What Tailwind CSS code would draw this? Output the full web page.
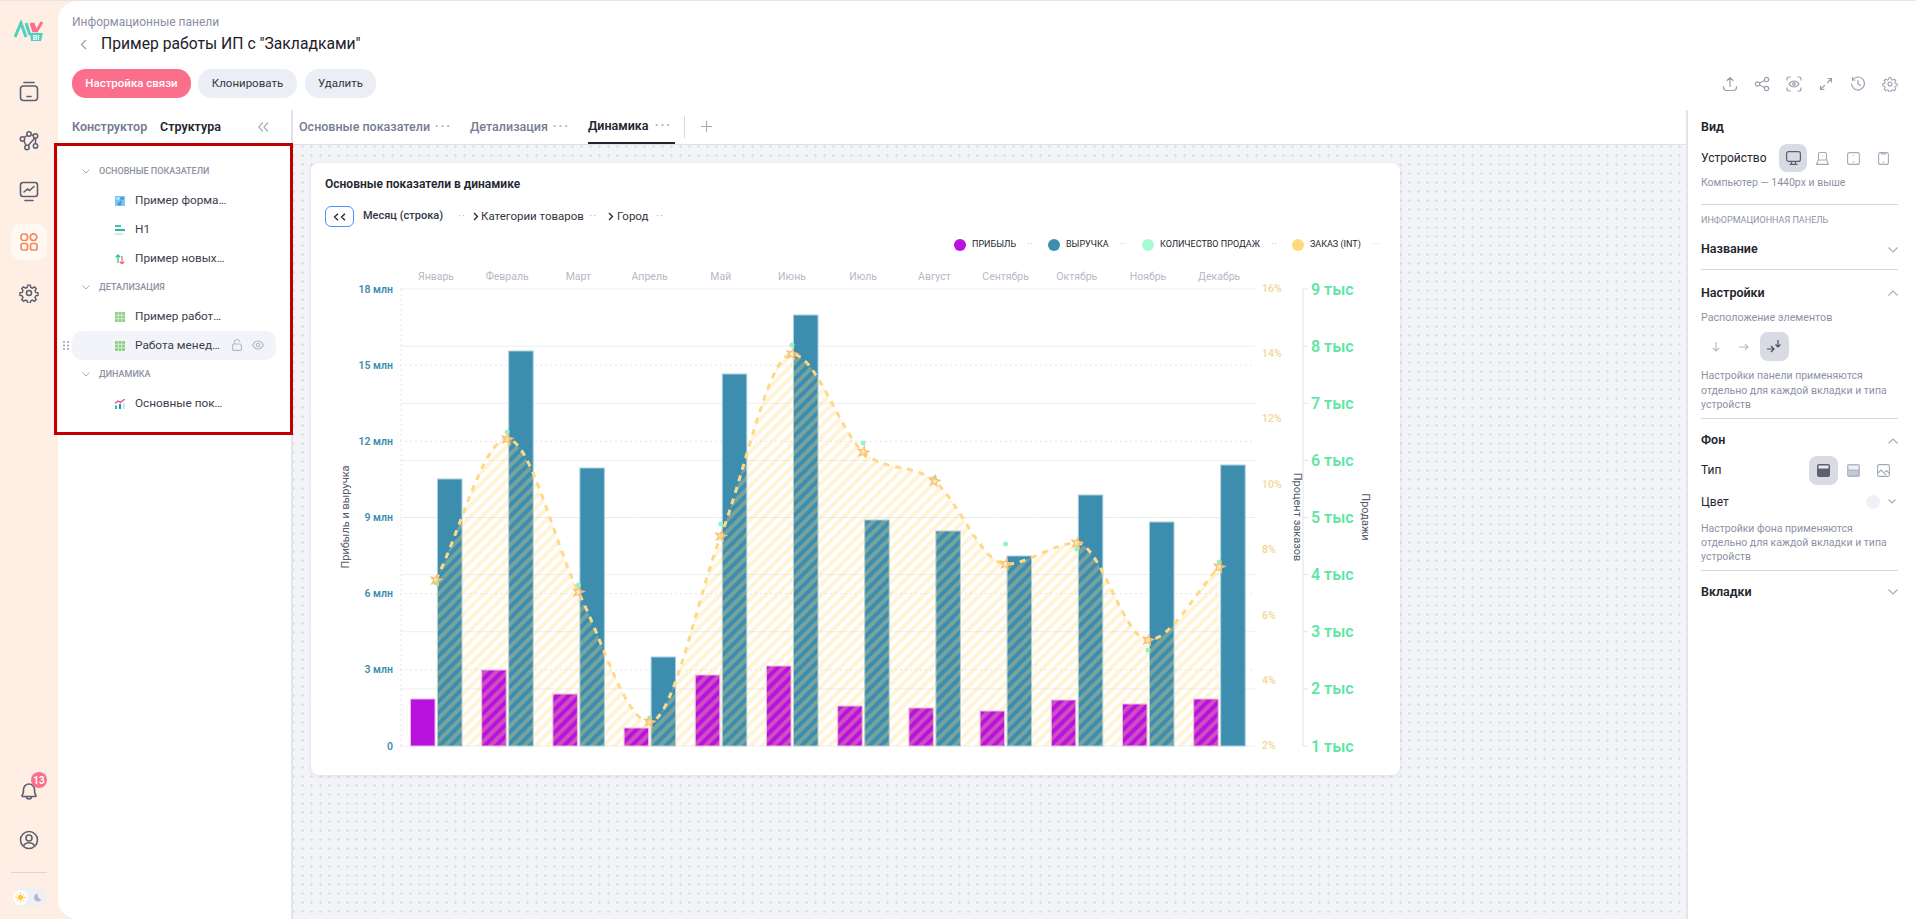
<!DOCTYPE html>
<html lang="ru">
<head>
<meta charset="UTF-8">
<title>Пример работы ИП с "Закладками"</title>
<script src="https://cdn.jsdelivr.net/npm/@tailwindcss/browser@4"></script>
</head>
<body class="[font-family:Roboto,sans-serif] bg-[#ffeee4] text-[#23252e] overflow-hidden">
<div class="flex h-[919px] w-[1916px] border-t border-[#e6e6e6] relative">

  <!-- Sidebar -->
  <aside class="w-[58px] shrink-0 flex flex-col items-center">
    <div class="h-[58px] flex items-center justify-center pt-[2px]">
      <svg width="30" height="22" viewBox="0 0 30 22" fill="none" stroke-width="3">
        <path d="M1 17 L7 3 L12 17" stroke="#4fd1c0"/>
        <path d="M12 3 L16 15" stroke="#4fd1c0"/>
        <path d="M17 3 L20 12 M22 12 L28 2" stroke="#fb6f8c"/>
        <path d="M19 3 L22 12" stroke="#fb6f8c"/>
        <path d="M16 13 h13 l-2 8 h-10z" fill="#4fd1c0" stroke="none"/>
        <text x="22" y="19.5" text-anchor="middle" font-size="7" font-weight="700" fill="#fff" stroke="none">BI</text>
      </svg>
    </div>
    <div class="mt-[20px] h-[24px] flex items-center justify-center">
      <svg width="20" height="21" viewBox="0 0 20 21" fill="none" stroke="#5b6070" stroke-width="1.6" stroke-linecap="round"><path d="M5 1.5h10"/><rect x="1.5" y="5" width="17" height="14.5" rx="3"/><path d="M8 15.5h4"/></svg>
    </div>
    <div class="mt-[26px] h-[24px] flex items-center justify-center">
      <svg width="20" height="20" viewBox="0 0 20 20" fill="none" stroke="#5b6070" stroke-width="1.5"><circle cx="3.5" cy="8" r="2.2"/><circle cx="10" cy="3" r="2.2"/><circle cx="16.5" cy="5" r="2.2"/><circle cx="8" cy="16.5" r="2.2"/><circle cx="16.5" cy="15" r="2.2"/><path d="M5.2 6.5 8.2 4.4M12 3.4l2.4.8M15.8 7 9.2 14.6M5 10l2 4.5M16.5 7.2v5.6"/></svg>
    </div>
    <div class="mt-[26px] h-[24px] flex items-center justify-center">
      <svg width="20" height="21" viewBox="0 0 20 21" fill="none" stroke="#5b6070" stroke-width="1.6" stroke-linecap="round"><rect x="1.5" y="1.5" width="17" height="14" rx="2.5"/><path d="M5 11l3.500-3 2 1.500L15 5.500"/><path d="M6 19.500h8"/></svg>
    </div>
    <div class="mt-[21px] w-[36px] h-[36px] rounded-[10px] bg-[#fff8f3] flex items-center justify-center">
      <svg width="18" height="18" viewBox="0 0 18 18" fill="none" stroke="#f08a5d" stroke-width="1.7"><rect x="1" y="1" width="6.500" height="6.500" rx="2.500"/><circle cx="13.500" cy="4.200" r="3.300"/><rect x="1" y="10.500" width="6.500" height="6.500" rx="1.800"/><rect x="10.500" y="10.500" width="6.500" height="6.500" rx="1.800"/></svg>
    </div>
    <div class="mt-[21px] h-[24px] flex items-center justify-center">
      <svg width="20" height="20" viewBox="0 0 24 24" fill="none" stroke="#5b6070" stroke-width="1.900"><circle cx="12" cy="12" r="3"/><path d="M10.300 1.500h3.400l.6 3 2.400 1 2.600-1.700 2.400 2.400-1.700 2.600 1 2.400 3 .6v3.400l-3 .6-1 2.400 1.700 2.600-2.400 2.400-2.600-1.700-2.400 1-.6 3h-3.400l-.6-3-2.400-1-2.600 1.700-2.400-2.400 1.700-2.600-1-2.400-3-.6v-3.400l3-.6 1-2.400L2.300 6.200l2.400-2.400 2.600 1.700 2.400-1z" transform="translate(1.200 1.200) scale(.9)"/></svg>
    </div>
    <div class="mt-auto relative h-[24px] w-[24px] flex items-center justify-center mb-[27px]">
      <svg width="18" height="20" viewBox="0 0 18 20" fill="none" stroke="#5b6070" stroke-width="1.600" stroke-linejoin="round"><path d="M2 14.500c1.500-1.500 1.500-3 1.500-6a5.500 5.500 0 0 1 11 0c0 3 0 4.500 1.500 6 .4.500 0 1-.5 1h-13c-.5 0-.9-.5-.5-1z"/><path d="M6.500 15.500a2.500 2.500 0 0 0 5 0"/></svg>
      <span class="absolute -top-[7px] left-[14px] w-[16px] h-[16px] rounded-full bg-[#fb6f8c] text-white text-[10px] font-semibold flex items-center justify-center">13</span>
    </div>
    <div class="h-[20px] flex items-center justify-center mb-[22px]">
      <svg width="20" height="20" viewBox="0 0 20 20" fill="none" stroke="#5b6070" stroke-width="1.600"><circle cx="10" cy="10" r="8.500"/><circle cx="10" cy="8" r="3"/><path d="M4.500 15.500c1.500-2 3.500-2.800 5.500-2.800s4 .8 5.500 2.800"/></svg>
    </div>
    <div class="w-[36px] border-t border-[#d5d8e0] mb-[15px]"></div>
    <div class="w-[35px] h-[18px] rounded-full bg-[#eef0f6] flex items-center justify-between px-[1px] mb-[13px]">
      <span class="w-[15px] h-[15px] rounded-full bg-white flex items-center justify-center">
        <svg width="11" height="11" viewBox="0 0 11 11" stroke="#ffc93c" stroke-width="1" stroke-linecap="round"><circle cx="5.500" cy="5.500" r="2.400" fill="#ffc93c"/><path d="M5.500.5v1M5.500 9.500v1M.5 5.500h1M9.500 5.500h1M2 2l.7.7M8.300 8.300l.7.7M2 9l.7-.7M8.300 2.700 9 2"/></svg>
      </span>
      <svg class="mr-[4px]" width="9" height="9" viewBox="0 0 9 9"><path d="M5 .5A4 4 0 1 0 8.500 6.500 4.500 4.500 0 0 1 5 .5z" fill="#b3b8cb"/></svg>
    </div>
  </aside>

  <!-- Main -->
  <main class="flex-1 min-w-0 flex flex-col bg-white rounded-l-[20px]">
    <header class="h-[109px] shrink-0 pt-[14px] pl-[14px] pr-[18px]">
      <div class="text-[12px] leading-[14px] text-[#8a8fa3]">Информационные панели</div>
      <div class="mt-[4px] h-[22px] flex items-center">
        <svg class="ml-[8px]" width="7" height="11" viewBox="0 0 7 11" fill="none" stroke="#9a9fb0" stroke-width="1.300"><path d="M6 1 1.500 5.500 6 10"/></svg>
        <h1 class="ml-[14px] text-[15.700px] leading-[22px] font-normal text-[#1e2029]">Пример работы ИП с "Закладками"</h1>
      </div>
      <div class="mt-[14px] flex items-center">
        <button class="h-[29px] w-[119px] rounded-[14px] bg-[#fb6f8c] text-white text-[11.500px] font-medium">Настройка связи</button>
        <button class="ml-[7px] h-[29px] w-[99px] rounded-[14px] bg-[#eceef5] text-[#33363f] text-[11.500px]">Клонировать</button>
        <button class="ml-[8px] h-[29px] w-[71px] rounded-[14px] bg-[#eceef5] text-[#33363f] text-[11.500px]">Удалить</button>
        <div class="ml-auto flex items-center gap-[16px] text-[#9ba0b0]">
          <svg width="16" height="16" viewBox="0 0 16 16" fill="none" stroke="currentColor" stroke-width="1.200" stroke-linecap="round"><path d="M8 10.500V2M5 4.500 8 1.500l3 3M1.500 10.500c0 2.500 1 4 3 4h7c2 0 3-1.500 3-4"/></svg>
          <svg width="16" height="16" viewBox="0 0 16 16" fill="none" stroke="currentColor" stroke-width="1.200"><circle cx="3.500" cy="8" r="2.200"/><circle cx="12.500" cy="3.500" r="2.200"/><circle cx="12.500" cy="12.500" r="2.200"/><path d="M5.500 7l5-2.500M5.500 9l5 2.500"/></svg>
          <svg width="16" height="16" viewBox="0 0 16 16" fill="none" stroke="currentColor" stroke-width="1.200"><path d="M1 4.500V3a2 2 0 0 1 2-2h1.500M11.500 1H13a2 2 0 0 1 2 2v1.500M15 11.500V13a2 2 0 0 1-2 2h-1.500M4.500 15H3a2 2 0 0 1-2-2v-1.500"/><path d="M3 8c1.300-2 3-3 5-3s3.700 1 5 3c-1.300 2-3 3-5 3s-3.700-1-5-3z"/><circle cx="8" cy="8" r="1.300"/></svg>
          <svg width="16" height="16" viewBox="0 0 16 16" fill="none" stroke="currentColor" stroke-width="1.200" stroke-linecap="round"><path d="M9.500 6.500 13.500 2.500M10 2.500h3.500V6M6.500 9.500l-4 4M6 13.500H2.500V10"/></svg>
          <svg width="16" height="16" viewBox="0 0 16 16" fill="none" stroke="currentColor" stroke-width="1.200" stroke-linecap="round"><path d="M2.500 4A6.500 6.500 0 1 1 1.500 8"/><path d="M2.500 1.500V4H5M8 4.500V8l2.500 1.500"/></svg>
          <svg width="16" height="16" viewBox="0 0 24 24" fill="none" stroke="currentColor" stroke-width="1.700"><circle cx="12" cy="12" r="3"/><path d="M10.300 1.500h3.400l.6 3 2.400 1 2.600-1.700 2.400 2.400-1.700 2.600 1 2.400 3 .6v3.400l-3 .6-1 2.400 1.700 2.600-2.400 2.400-2.600-1.700-2.400 1-.6 3h-3.400l-.6-3-2.400-1-2.600 1.700-2.400-2.400 1.700-2.600-1-2.400-3-.6v-3.400l3-.6 1-2.400L2.300 6.200l2.400-2.400 2.600 1.700 2.400-1z" transform="translate(1.200 1.200) scale(.9)"/></svg>
        </div>
      </div>
    </header>

    <div class="flex flex-1 min-h-0">
      <!-- Left panel -->
      <section class="w-[235px] shrink-0 border-r-2 border-[#e1e4ed]">
        <div class="h-[34px] pl-[14px] pr-[22px] flex items-center text-[12.500px] font-semibold">
          <span class="w-[88px] text-[#767c92]">Конструктор</span>
          <span class="text-[#23252e]">Структура</span>
          <svg class="ml-auto" width="11" height="10" viewBox="0 0 11 10" fill="none" stroke="#a5aabb" stroke-width="1.100"><path d="M5 .5.800 5 5 9.500M10 .5 5.800 5 10 9.500"/></svg>
        </div>
        <ul class="ml-[14px] w-[204px] pt-[13px] text-[11.800px] text-[#3b3e4a]">
          <li class="h-[29px] pl-[10px] flex items-center text-[9px] font-medium text-[#8d92a5]">
            <svg class="mr-[9px]" width="8" height="5" viewBox="0 0 8 5" fill="none" stroke="#a5aabb" stroke-width="1"><path d="M.5.500 4 4 7.500.500"/></svg>ОСНОВНЫЕ ПОКАЗАТЕЛИ
          </li>
          <li class="h-[29px] pl-[43px] flex items-center gap-[10px]">
            <svg width="10" height="10" viewBox="0 0 10 10"><rect width="10" height="10" rx="1" fill="#7cc4f0"/><rect x="1.500" y="1.500" width="3" height="2" fill="#d6ecfa"/><rect x="5.500" y="1.500" width="3" height="2" fill="#2f86cc"/><path d="M6 8.500h-2.500v-1.500H6V4.500" stroke="#2f86cc" fill="none"/></svg>Пример форма…
          </li>
          <li class="h-[29px] pl-[43px] flex items-center gap-[10px]">
            <svg width="10" height="10" viewBox="0 0 10 10"><rect y="0" width="6" height="2" fill="#40c4ae"/><rect y="4" width="10" height="2" fill="#2cb5a0"/><rect y="8" width="8" height="2" fill="#c6efe7"/></svg>H1
          </li>
          <li class="h-[29px] pl-[43px] flex items-center gap-[10px]">
            <svg width="10" height="10" viewBox="0 0 10 10" fill="none" stroke-width="1.300"><path d="M3 9V1M.8 3.200 3 1l2.200 2.200" stroke="#2cc595"/><path d="M7 2v8M4.800 7.800 7 10l2.200-2.200" stroke="#f76a72"/></svg>Пример новых…
          </li>
          <li class="h-[29px] pl-[10px] flex items-center text-[9px] font-medium text-[#8d92a5]">
            <svg class="mr-[9px]" width="8" height="5" viewBox="0 0 8 5" fill="none" stroke="#a5aabb" stroke-width="1"><path d="M.5.500 4 4 7.500.500"/></svg>ДЕТАЛИЗАЦИЯ
          </li>
          <li class="h-[29px] pl-[43px] flex items-center gap-[10px]">
            <svg width="10" height="10" viewBox="0 0 10 10"><rect width="10" height="10" fill="#8fcf86"/><path d="M3.300 0v10M6.700 0v10M0 3.300h10M0 6.700h10" stroke="#e0f3dc" stroke-width=".8"/></svg>Пример работ…
          </li>
          <li class="relative h-[29px] pl-[43px] flex items-center gap-[10px] rounded-[10px] bg-[#f3f4f9]">
            <svg class="absolute -left-[9px] top-[10px]" width="6" height="9" viewBox="0 0 6 9" fill="#8d92a5"><circle cx="1" cy="1" r=".9"/><circle cx="5" cy="1" r=".9"/><circle cx="1" cy="4.500" r=".9"/><circle cx="5" cy="4.500" r=".9"/><circle cx="1" cy="8" r=".9"/><circle cx="5" cy="8" r=".9"/></svg>
            <svg width="10" height="10" viewBox="0 0 10 10"><rect width="10" height="10" fill="#8fcf86"/><path d="M3.300 0v10M6.700 0v10M0 3.300h10M0 6.700h10" stroke="#e0f3dc" stroke-width=".8"/></svg>Работа менед…
            <svg class="absolute left-[160px] top-[8px]" width="10" height="12" viewBox="0 0 10 12" fill="none" stroke="#b3b8c8" stroke-width="1.100"><rect x=".6" y="5" width="8.800" height="6.400" rx="1.200"/><path d="M2.500 5V3a2.500 2.500 0 0 1 5 0"/></svg>
            <svg class="absolute left-[180px] top-[9px]" width="12" height="10" viewBox="0 0 12 10" fill="none" stroke="#b3b8c8" stroke-width="1.100"><path d="M.6 5C2 2.300 3.800 1 6 1s4 1.300 5.400 4C10 7.700 8.200 9 6 9S2 7.700.6 5z"/><circle cx="6" cy="5" r="1.700"/></svg>
          </li>
          <li class="h-[29px] pl-[10px] flex items-center text-[9px] font-medium text-[#8d92a5]">
            <svg class="mr-[9px]" width="8" height="5" viewBox="0 0 8 5" fill="none" stroke="#a5aabb" stroke-width="1"><path d="M.5.500 4 4 7.500.500"/></svg>ДИНАМИКА
          </li>
          <li class="h-[29px] pl-[43px] flex items-center gap-[10px]">
            <svg width="10" height="10" viewBox="0 0 10 10" fill="none"><path d="M0 4.500 3 2l2.500 1.500L10 0" stroke="#e0408c" stroke-width="1.200"/><rect x="0" y="6.500" width="2" height="3.500" fill="#2cb5a0"/><rect x="4" y="5" width="2" height="5" fill="#2c8fb5"/><rect x="8" y="4" width="2" height="6" fill="#c6efe7"/></svg>Основные пок…
          </li>
        </ul>
      </section>

      <!-- Center -->
      <section class="flex-1 min-w-0 flex flex-col">
        <div class="h-[35px] shrink-0 border-b border-[#dfe2ea] pl-[6px] flex items-end text-[12.500px] font-medium text-[#767c92] whitespace-nowrap">
          <div class="w-[171px] h-[34px] pr-[18px] flex items-center justify-between">Основные показатели<span class="tracking-[2px] font-bold text-[#a5aabb]">···</span></div>
          <div class="w-[118px] h-[34px] pr-[18px] flex items-center justify-between">Детализация<span class="tracking-[2px] font-bold text-[#a5aabb]">···</span></div>
          <div class="w-[87px] h-[34px] pr-[3px] flex items-center justify-between border-b-2 border-[#23252e] text-[#23252e] font-semibold">Динамика<span class="tracking-[2px] font-bold text-[#a5aabb]">···</span></div>
          <div class="ml-[9px] mb-[6px] h-[22px] border-l border-[#d5d8e0]"></div>
          <svg class="ml-[16px] mb-[12px]" width="11" height="11" viewBox="0 0 11 11" stroke="#a5aabb" stroke-width="1.100"><path d="M5.500 0v11M0 5.500h11"/></svg>
        </div>
        <div class="flex-1 bg-[#f3f4f8] bg-[radial-gradient(circle,#dadde5_1px,transparent_1.300px)] bg-[length:9px_9px] bg-[position:5px_-3px] pl-[18px] pt-[18px]">
          <div class="w-[1089px] h-[612px] bg-white rounded-[8px] shadow-[0_1px_4px_rgba(60,70,100,0.10)]">
            <div class="pl-[14px] pt-[14px] text-[12px] leading-[14px] font-semibold text-[#23252e]">Основные показатели в динамике</div>
            <div class="mt-[15px] pl-[14px] h-[21px] flex items-center text-[11.500px] text-[#33363f] whitespace-nowrap">
              <span class="w-[29px] h-[21px] rounded-[6px] border border-[#4f8ef7] flex items-center justify-center">
                <svg width="13" height="8" viewBox="0 0 13 8" fill="none" stroke="#23252e" stroke-width="1.300"><path d="M5 .8 1.500 4 5 7.200M12 .8 8.500 4 12 7.200"/></svg>
              </span>
              <span class="ml-[9px] w-[95px] text-[11px] font-medium">Месяц (строка)</span>
              <span class="w-[15px] text-[#a5aabb] tracking-[1px]">··</span>
              <svg width="6" height="9" viewBox="0 0 6 9" fill="none" stroke="#23252e" stroke-width="1.300"><path d="M1 1l3.500 3.500L1 8"/></svg>
              <span class="ml-[2px] w-[108px]">Категории товаров</span>
              <span class="w-[19px] text-[#a5aabb] tracking-[1px]">··</span>
              <svg width="6" height="9" viewBox="0 0 6 9" fill="none" stroke="#23252e" stroke-width="1.300"><path d="M1 1l3.500 3.500L1 8"/></svg>
              <span class="ml-[3px] w-[39px]">Город</span>
              <span class="text-[#a5aabb] tracking-[1px]">··</span>
            </div>
            <div class="mt-[11px] h-[14px] flex items-center text-[9px] text-[#23252e] pl-[643px] whitespace-nowrap">
              <div class="w-[94px] shrink-0 flex items-center"><span class="w-[12px] h-[12px] rounded-full bg-[#b812dd] mr-[6px]"></span><span class="w-[55px]">ПРИБЫЛЬ</span><span class="text-[#a5aabb] tracking-[1px]">··</span></div>
              <div class="w-[94px] shrink-0 flex items-center"><span class="w-[12px] h-[12px] rounded-full bg-[#3c8dae] mr-[6px]"></span><span class="w-[54px]">ВЫРУЧКА</span><span class="text-[#a5aabb] tracking-[1px]">··</span></div>
              <div class="w-[150px] shrink-0 flex items-center"><span class="w-[12px] h-[12px] rounded-full bg-[#a5fcd2] mr-[6px]"></span><span class="w-[111px]">КОЛИЧЕСТВО ПРОДАЖ</span><span class="text-[#a5aabb] tracking-[1px]">··</span></div>
              <div class="shrink-0 flex items-center"><span class="w-[12px] h-[12px] rounded-full bg-[#ffd97d] mr-[6px]"></span><span class="w-[63px]">ЗАКАЗ (INT)</span><span class="text-[#a5aabb] tracking-[1px]">··</span></div>
            </div>
            <svg id="chart" class="block mt-[10px]" width="1089" height="513" viewBox="311 262 1089 513"></svg>
          </div>
        </div>
      </section>

      <!-- Right panel -->
      <section class="w-[230px] shrink-0 border-l-2 border-[#e1e4ed] pl-[13px] pr-[18px] text-[#23252e]">
        <div class="h-[34px] flex items-center text-[12.500px] font-semibold">Вид</div>
        <div class="h-[28px] flex items-center text-[12px]">
          <span class="w-[81px]">Устройство</span>
          <span class="-ml-[3px] w-[28px] h-[28px] rounded-[8px] bg-[#d8dbe3] flex items-center justify-center">
            <svg width="15" height="14" viewBox="0 0 15 14" fill="none" stroke="#5b6070" stroke-width="1.200"><rect x=".6" y=".6" width="13.800" height="9.800" rx="2"/><path d="M5.500 10.500v3M9.500 10.500v3M3.500 13.400h8"/></svg>
          </span>
          <svg class="ml-[9px]" width="13" height="13" viewBox="0 0 13 13" fill="none" stroke="#a5aabb" stroke-width="1.100"><path d="M2.500 8V2a1.500 1.500 0 0 1 1.500-1.500h5A1.500 1.500 0 0 1 10.500 2v6M.6 12.400l1.600-4.400h8.600l1.600 4.400z"/><path d="M6.500 3.500v1"/></svg>
          <svg class="ml-[18px]" width="13" height="13" viewBox="0 0 13 13" fill="none" stroke="#a5aabb" stroke-width="1.100"><rect x=".6" y=".6" width="11.800" height="11.800" rx="2"/><path d="M6.500 3v1M5.500 10h2"/></svg>
          <svg class="ml-[18px]" width="11" height="13" viewBox="0 0 11 13" fill="none" stroke="#a5aabb" stroke-width="1.100"><rect x=".6" y=".6" width="9.800" height="11.800" rx="2"/><path d="M3.500 1v1h4V1M4.500 10h2"/></svg>
        </div>
        <div class="h-[22px] flex items-center text-[10.500px] text-[#8d92a5]">Компьютер — 1440px и выше</div>
        <div class="h-[11px] border-b border-[#d5d8e0]"></div>
        <div class="mt-[7px] h-[18px] flex items-center text-[9px] text-[#8d92a5]">ИНФОРМАЦИОННАЯ ПАНЕЛЬ</div>
        <div class="h-[40px] flex items-center justify-between text-[12.500px] font-semibold border-b border-[#d5d8e0]">Название
          <svg width="10" height="6" viewBox="0 0 10 6" fill="none" stroke="#a5aabb" stroke-width="1.100"><path d="M.5.500 5 5 9.500.500"/></svg>
        </div>
        <div class="mt-[6px] h-[34px] flex items-center justify-between text-[12.500px] font-semibold">Настройки
          <svg width="10" height="6" viewBox="0 0 10 6" fill="none" stroke="#a5aabb" stroke-width="1.100"><path d="M.5 5.500 5 1l4.500 4.500"/></svg>
        </div>
        <div class="h-[17px] flex items-center text-[10.700px] text-[#8d92a5]">Расположение элементов</div>
        <div class="mt-[5px] h-[29px] flex items-center">
          <svg class="ml-[11px]" width="8" height="10" viewBox="0 0 8 10" fill="none" stroke="#b3b8c8" stroke-width="1.100"><path d="M4 0v9M.8 5.800 4 9l3.200-3.200"/></svg>
          <svg class="ml-[19px]" width="10" height="8" viewBox="0 0 10 8" fill="none" stroke="#b3b8c8" stroke-width="1.100"><path d="M0 4h9M5.800.8 9 4 5.800 7.200"/></svg>
          <span class="ml-[11px] w-[29px] h-[29px] rounded-[8px] bg-[#d8dbe3] flex items-center justify-center">
            <svg width="16" height="14" viewBox="0 0 16 14" fill="none" stroke="#4a4e5c" stroke-width="1.200"><path d="M0 9h7M4 6l3 3-3 3M11 0v7M8.500 4.500 11 7l2.500-2.500"/></svg>
          </span>
        </div>
        <p class="mt-[8px] text-[10.500px] leading-[14.500px] text-[#8d92a5]">Настройки панели применяются отдельно для каждой вкладки и типа устройств</p>
        <div class="h-[6px] border-b border-[#d5d8e0]"></div>
        <div class="mt-[11px] h-[22px] flex items-center justify-between text-[12.500px] font-semibold">Фон
          <svg width="10" height="6" viewBox="0 0 10 6" fill="none" stroke="#a5aabb" stroke-width="1.100"><path d="M.5 5.500 5 1l4.500 4.500"/></svg>
        </div>
        <div class="mt-[4px] h-[29px] flex items-center text-[12px]">
          <span>Тип</span>
          <span class="ml-auto w-[29px] h-[29px] rounded-[8px] bg-[#d8dbe3] flex items-center justify-center">
            <svg width="13" height="13" viewBox="0 0 13 13"><rect width="13" height="13" rx="2" fill="#5b6070"/><rect x="1.500" y="1.500" width="10" height="3" fill="#e8eaf0"/></svg>
          </span>
          <svg class="ml-[9px]" width="13" height="13" viewBox="0 0 13 13"><rect width="13" height="13" rx="2" fill="#b3b8c8"/><rect x="1.500" y="1.500" width="10" height="4" fill="#f0f1f6"/><path d="M1.500 8h10M1.500 10h10" stroke="#fff" stroke-dasharray="1 1"/></svg>
          <svg class="ml-[17px] mr-[8px]" width="13" height="13" viewBox="0 0 13 13" fill="none" stroke="#a5aabb" stroke-width="1.100"><rect x=".6" y=".6" width="11.800" height="11.800" rx="1.500"/><path d="M1 9l3-3 5 5M8 8l1.500-1.500 3 3"/></svg>
        </div>
        <div class="h-[34px] flex items-center text-[12px]">
          <span>Цвет</span>
          <span class="ml-auto w-[14px] h-[14px] rounded-full bg-[#f0f1f6]"></span>
          <svg class="ml-[8px] mr-[2px]" width="8" height="5" viewBox="0 0 8 5" fill="none" stroke="#a5aabb" stroke-width="1.100"><path d="M.5.500 4 4 7.500.500"/></svg>
        </div>
        <p class="mt-[3px] text-[10.500px] leading-[14px] text-[#8d92a5]">Настройки фона применяются отдельно для каждой вкладки и типа устройств</p>
        <div class="h-[7px] border-b border-[#d5d8e0]"></div>
        <div class="h-[43px] flex items-center justify-between text-[12.500px] font-semibold">Вкладки
          <svg width="10" height="6" viewBox="0 0 10 6" fill="none" stroke="#a5aabb" stroke-width="1.100"><path d="M.5.500 5 5 9.500.500"/></svg>
        </div>
      </section>
    </div>
  </main>

  <!-- Red annotation frame -->
  <div class="absolute left-[54px] top-[142px] w-[239px] h-[292px] border-[3px] border-[#c00000] pointer-events-none"></div>
</div>

<script>
// chart data, in page pixels
var months = ['Январь','Февраль','Март','Апрель','Май','Июнь','Июль','Август','Сентябрь','Октябрь','Ноябрь','Декабрь'];
var blue = [479,351,468,657,374,315,520,531,556,495,522,465];
var purple = [699,670,694,728,675,666,706,708,711,700,704,699];
var order = [580,439,592,722,536,354,452,481,564,543,640,567];
var sales = [583,432,585,718,524,345,443,478,544,549,650,562];
var base = 746, top0 = 289, step = 71.2, x0 = 436;
var cx = function (i) { return x0 + step * i; };
var s = '';

s += '<defs><pattern id="hatch" width="8" height="8" patternUnits="userSpaceOnUse" patternTransform="rotate(45)">' +
  '<rect width="4" height="8" fill="#ffd97d" fill-opacity="0.3"/></pattern></defs>';

// grid
for (var i = 0; i <= 8; i++) {
  var y = top0 + i * 57.125;
  s += '<line x1="400" x2="1255" y1="' + y + '" y2="' + y + '" stroke="#eceef2"/>';
  s += '<line x1="1303" x2="1308" y1="' + y + '" y2="' + y + '" stroke="#dfe2ea"/>';
  s += '<text x="1311" y="' + y + '" dominant-baseline="central" font-size="16" font-weight="600" fill="#5fe6a2">' + (9 - i) + ' тыс</text>';
}
s += '<line x1="1303" x2="1303" y1="289" y2="746" stroke="#dfe2ea"/>';
var leftLabels = ['18 млн','15 млн','12 млн','9 млн','6 млн','3 млн','0'];
for (i = 0; i <= 6; i++) {
  y = top0 + i * 76.17;
  if (i > 0 && i < 6) s += '<line x1="400" x2="1255" y1="' + y + '" y2="' + y + '" stroke="#e4e6ec" stroke-dasharray="2 3"/>';
  s += '<text x="393" y="' + y + '" text-anchor="end" dominant-baseline="central" font-size="10.500" font-weight="600" fill="#3c8dae">' + leftLabels[i] + '</text>';
}
s += '<line x1="401" x2="401" y1="289" y2="746" stroke="#e4e6ec" stroke-dasharray="2 3"/>';
var pct = ['16%','14%','12%','10%','8%','6%','4%','2%'];
for (i = 0; i < 8; i++) {
  s += '<text x="1262" y="' + (288 + i * 65.4) + '" dominant-baseline="central" font-size="10.500" font-weight="500" fill="#f2d795">' + pct[i] + '</text>';
}
months.forEach(function (m, i) {
  s += '<text x="' + cx(i) + '" y="276" text-anchor="middle" dominant-baseline="central" font-size="10.500" fill="#b5b9c7">' + m + '</text>';
});
s += '<text transform="translate(345 517) rotate(-90)" text-anchor="middle" dominant-baseline="central" font-size="11" fill="#55596a">Прибыль и выручка</text>';
s += '<text transform="translate(1297 517) rotate(90)" text-anchor="middle" dominant-baseline="central" font-size="11" fill="#55596a">Процент заказов</text>';
s += '<text transform="translate(1365 517) rotate(90)" text-anchor="middle" dominant-baseline="central" font-size="11" fill="#55596a">Продажи</text>';

// bars
for (i = 0; i < 12; i++) {
  s += '<rect x="' + (cx(i) - 25.5) + '" y="' + purple[i] + '" width="24.500" height="' + (base - purple[i]) + '" fill="#b812dd" stroke="#e9b6f2" stroke-width="1"/>';
  s += '<rect x="' + (cx(i) + 1.500) + '" y="' + blue[i] + '" width="24.500" height="' + (base - blue[i]) + '" fill="#3c8dae" stroke="#a9d0e0" stroke-width="1"/>';
}

// order line: monotone curve
var slopes = order.map(function (y, i) {
  if (i === 0 || i === 11) return (order[i === 0 ? 1 : 11] - order[i === 0 ? 0 : 10]) / step;
  var a = order[i] - order[i - 1], b = order[i + 1] - order[i];
  return a * b <= 0 ? 0 : (a + b) / (2 * step);
});
var d = 'M' + cx(0) + ' ' + order[0];
for (i = 1; i < 12; i++) {
  var h = step / 3;
  d += ' C' + (cx(i - 1) + h) + ' ' + (order[i - 1] + slopes[i - 1] * h) + ' ' + (cx(i) - h) + ' ' + (order[i] - slopes[i] * h) + ' ' + cx(i) + ' ' + order[i];
}
s += '<path d="' + d + ' L' + cx(11) + ' ' + base + ' L' + cx(0) + ' ' + base + 'Z" fill="url(#hatch)"/>';
s += '<path d="' + d + '" fill="none" stroke="#ffd98a" stroke-width="3" stroke-dasharray="6 6"/>';

// markers
for (i = 0; i < 12; i++) {
  s += '<circle cx="' + cx(i) + '" cy="' + sales[i] + '" r="2.500" fill="#8ff5c5"/>';
  var pts = [];
  for (var k = 0; k < 10; k++) {
    var r = k % 2 ? 2.2 : 5.5, a = -Math.PI / 2 + k * Math.PI / 5 + 0.2;
    pts.push((cx(i) + r * Math.cos(a)).toFixed(1) + ',' + (order[i] + r * Math.sin(a)).toFixed(1));
  }
  s += '<polygon points="' + pts.join(' ') + '" fill="#ffe3a0" fill-opacity="0.5" stroke="#f9bf75" stroke-width="1.300"/>';
}
document.getElementById('chart').innerHTML = s;
</script>
</body>
</html>
